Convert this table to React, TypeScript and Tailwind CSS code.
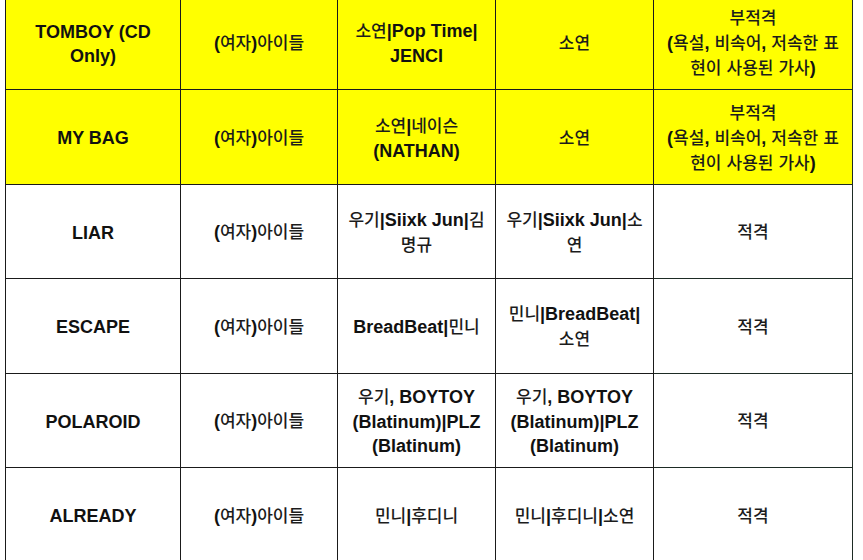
import React from "react";

type Row = { yellow?: boolean; cells: string[][] };

const rows: Row[] = [
  {
    yellow: true,
    cells: [
      ["TOMBOY (CD", "Only)"],
      ["(여자)아이들"],
      ["소연|Pop Time|", "JENCI"],
      ["소연"],
      ["부적격", "(욕설, 비속어, 저속한 표", "현이 사용된 가사)"],
    ],
  },
  {
    yellow: true,
    cells: [
      ["MY BAG"],
      ["(여자)아이들"],
      ["소연|네이슨", "(NATHAN)"],
      ["소연"],
      ["부적격", "(욕설, 비속어, 저속한 표", "현이 사용된 가사)"],
    ],
  },
  {
    cells: [
      ["LIAR"],
      ["(여자)아이들"],
      ["우기|Siixk Jun|김", "명규"],
      ["우기|Siixk Jun|소", "연"],
      ["적격"],
    ],
  },
  {
    cells: [
      ["ESCAPE"],
      ["(여자)아이들"],
      ["BreadBeat|민니"],
      ["민니|BreadBeat|", "소연"],
      ["적격"],
    ],
  },
  {
    cells: [
      ["POLAROID"],
      ["(여자)아이들"],
      ["우기, BOYTOY", "(Blatinum)|PLZ", "(Blatinum)"],
      ["우기, BOYTOY", "(Blatinum)|PLZ", "(Blatinum)"],
      ["적격"],
    ],
  },
  {
    cells: [
      ["ALREADY"],
      ["(여자)아이들"],
      ["민니|후디니"],
      ["민니|후디니|소연"],
      ["적격"],
    ],
  },
];

// latin runs come out bold, hangul runs lighter (like the excel sheet)
function Rich({ text }: { text: string }) {
  const parts = text.split(/([가-힣]+)/);
  return (
    <>
      {parts.map((p, i) =>
        /[가-힣]/.test(p) ? (
          <span key={i} className="font-medium text-[17px] text-[#1c1c1c]">
            {p}
          </span>
        ) : (
          <span key={i} className="font-bold">
            {p}
          </span>
        )
      )}
    </>
  );
}

export default function App() {
  return (
    <div className="w-[863px] h-[560px] overflow-hidden bg-white">
      <div
        className="ml-[5px] mt-[-4px] grid w-[848px] grid-cols-[175px_157px_158px_158px_199px] grid-rows-[94px_95px_94px_95px_94px_95px] border-l border-[#1a1a1a] text-[18px] leading-[24px] text-[#111]"
        style={{ fontFamily: '"Liberation Sans", "Noto Sans CJK KR", sans-serif' }}
      >
        {rows.map((row, r) =>
          row.cells.map((lines, c) => (
            <div
              key={`${r}-${c}`}
              className={`flex flex-col items-center justify-center border-b border-r px-1 pt-[2px] text-center whitespace-nowrap ${
                c === 4 ? "border-[#1d2b24]" : "border-[#1a1a1a]"
              } ${row.yellow ? "bg-[#ffff00]" : "bg-white"}`}
            >
              {lines.map((l, i) => (
                <div key={i}>
                  <Rich text={l} />
                </div>
              ))}
            </div>
          ))
        )}
      </div>
    </div>
  );
}
